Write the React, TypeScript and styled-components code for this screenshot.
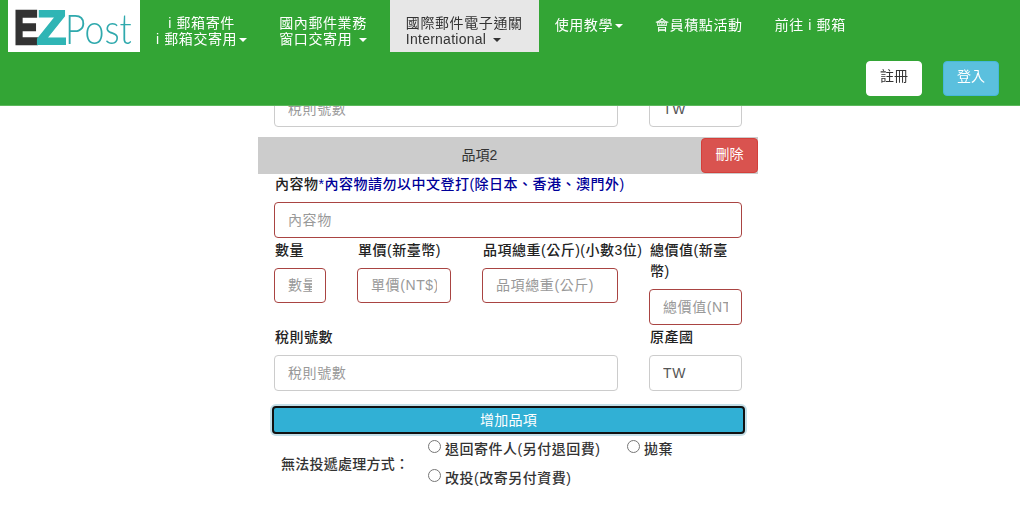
import React from "react";
import styled, { createGlobalStyle } from "styled-components";

const FONT = `"Liberation Sans", "Noto Sans CJK TC", sans-serif`;

const Global = createGlobalStyle`
  html, body { margin: 0; padding: 0; background: #fff; overflow: hidden; }
  body { font-family: ${FONT}; font-size: 14px; color: #333; }
  * { box-sizing: border-box; }
`;

const Header = styled.header`
  position: fixed;
  top: 0; left: 0; right: 0;
  height: 106px;
  background: #33a535;
  border-bottom: 1px solid #5cb85c;
  z-index: 10;
`;
const TopRow = styled.div`
  display: flex;
  align-items: flex-start;
  padding-left: 8px;
  height: 61px;
`;
const LogoBox = styled.div`
  width: 132px;
  height: 52px;
  background: #fff;
  flex: none;
`;
const LogoArt = styled.svg`
  display: block;
  overflow: visible;
`;
const NavItem = styled.div<{ $active?: boolean; $wide?: boolean; $single?: boolean }>`
  height: 52px;
  padding: ${p => (p.$single ? "17px" : "15px")} ${p => (p.$wide ? "23px" : "16px")} 0 16px;
  color: ${p => (p.$active ? "#333" : "#fff")};
  background: ${p => (p.$active ? "#e7e7e7" : "transparent")};
  line-height: 16px;
  letter-spacing: 0.6px;
  text-align: ${p => (p.$active ? "left" : "center")};
  white-space: nowrap;
`;
const Latin = styled.span`
  letter-spacing: 0.25px;
`;
const Caret = styled.span`
  display: inline-block;
  width: 0; height: 0;
  margin-left: 2px;
  vertical-align: middle;
  border-top: 4px solid currentColor;
  border-left: 4px solid transparent;
  border-right: 4px solid transparent;
`;
const ButtonRow = styled.div`
  display: flex;
  justify-content: flex-end;
  gap: 21px;
  padding-right: 21px;
`;
const AuthButton = styled.button<{ $primary?: boolean }>`
  width: 56px;
  height: 35px;
  border-radius: 4px;
  border: 1px solid ${p => (p.$primary ? "#46b8da" : "#fff")};
  background: ${p => (p.$primary ? "#5bc0de" : "#fff")};
  color: ${p => (p.$primary ? "#fff" : "#333")};
  font: 14px/20px ${FONT};
  padding: 0 0 5px;
`;

const Main = styled.main`
  width: 500px;
  margin-left: 258px;
  padding-top: 91px;
`;
const Grid = styled.div<{ $cols: string; $top?: number }>`
  display: grid;
  grid-template-columns: ${p => p.$cols};
  column-gap: 31px;
  padding: 0 16px;
  margin-top: ${p => p.$top ?? 0}px;
`;
const Field = styled.div`
  display: flex;
  flex-direction: column;
  justify-content: flex-start;
`;
const Label = styled.label<{ $nowrap?: boolean }>`
  display: block;
  font-weight: 500;
  line-height: 21.5px;
  letter-spacing: 0.5px;
  padding-left: 1px;
  margin-bottom: 6.5px;
  color: #222;
  white-space: ${p => (p.$nowrap ? "nowrap" : "normal")};
`;
const Input = styled.input<{ $error?: boolean }>`
  display: block;
  width: 100%;
  height: 35.5px;
  border-radius: 4px;
  border: 1px solid ${p => (p.$error ? "#a94442" : "#ccc")};
  padding: 0 13px;
  font: 14px ${FONT};
  letter-spacing: 0.6px;
  color: #555;
  background: #fff;
  outline: none;
  &::placeholder { color: #999; opacity: 1; }
`;
const ItemBar = styled.div`
  position: relative;
  margin-top: 10px;
  height: 37px;
  background: #ccc;
  text-align: center;
  line-height: 37px;
  color: #333;
  padding-right: 57px;
`;
const DeleteButton = styled.button`
  position: absolute;
  right: 0; top: 1px;
  width: 57px;
  height: 35px;
  border: 1px solid #d43f3a;
  border-radius: 4px;
  background: #d9534f;
  color: #fff;
  font: 14px/20px ${FONT};
  padding: 0 0 2px;
`;
const ContentLabel = styled(Label)`
  margin: 0 16px 7px;
`;
const Notice = styled.span`
  color: #000099;
`;
const Block = styled.div`
  padding: 0 16px;
`;
const AddWrap = styled.div`
  margin: 15.5px 0 0 14px;
`;
const AddButton = styled.button`
  display: block;
  width: 473px;
  height: 28px;
  background: #31b0d5;
  color: #fff;
  font: 14px/20px ${FONT};
  letter-spacing: 0.25px;
  border: 2px solid #111;
  border-radius: 4px;
  box-shadow: 0 0 0 2px #c4dfe8;
  padding: 0;
`;
const Disposal = styled.div`
  display: flex;
  align-items: center;
  margin-top: 3.5px;
  padding-left: 23px;
`;
const DisposalLabel = styled.div`
  width: 147px;
  font-weight: 500;
  letter-spacing: 0.25px;
`;
const RadioGroup = styled.div`
  display: grid;
  grid-template-columns: 199px auto;
  justify-content: start;
  row-gap: 8px;
`;
const RadioLabel = styled.label`
  display: flex;
  align-items: center;
  height: 21px;
  font-weight: 500;
  letter-spacing: 0.5px;
  white-space: nowrap;
`;
const Radio = styled.input`
  width: 13px;
  height: 13px;
  margin: 0 4px 3px 0;
  flex: none;
`;

function Logo() {
  return (
    <LogoArt width="132" height="52" viewBox="0 0 132 52" role="img" aria-label="EZPost">
      <text transform="translate(6 44) scale(.76 1)" fontFamily="Liberation Sans" fontWeight="700" fontSize="48" fill="#333" stroke="#333" strokeWidth="2.5">E</text>
      <text transform="translate(28.5 44) scale(1.02 1)" fontFamily="Liberation Sans" fontWeight="700" fontSize="48" fill="#2fb5b5" stroke="#2fb5b5" strokeWidth="2">Z</text>
      <text transform="translate(57 44) scale(.87 1)" fontFamily="Lato" fontWeight="300" fontSize="41" fill="#2fa9ad">Post</text>
    </LogoArt>
  );
}

export default function App() {
  return (
    <>
      <Global />
      <Header>
        <TopRow>
          <LogoBox><Logo /></LogoBox>
          <NavItem>i 郵箱寄件<br />i 郵箱交寄用<Caret /></NavItem>
          <NavItem $wide>國內郵件業務<br />窗口交寄用 <Caret /></NavItem>
          <NavItem $active>國際郵件電子通關<br /><Latin>International</Latin> <Caret /></NavItem>
          <NavItem $single>使用教學<Caret /></NavItem>
          <NavItem $single>會員積點活動</NavItem>
          <NavItem $single>前往 i 郵箱</NavItem>
        </TopRow>
        <ButtonRow>
          <AuthButton>註冊</AuthButton>
          <AuthButton $primary>登入</AuthButton>
        </ButtonRow>
      </Header>
      <Main>
        <Grid $cols="344px 93px">
          <Input placeholder="稅則號數" readOnly />
          <Input defaultValue="TW" />
        </Grid>
        <ItemBar>品項2<DeleteButton>刪除</DeleteButton></ItemBar>
        <ContentLabel>內容物<Notice>*內容物請勿以中文登打(除日本、香港、澳門外)</Notice></ContentLabel>
        <Block><Input $error placeholder="內容物" /></Block>
        <Grid $cols="52px 94px 136px 93px" $top={2}>
          <Field><Label>數量</Label><Input $error placeholder="數量" /></Field>
          <Field><Label>單價(新臺幣)</Label><Input $error placeholder="單價(NT$)" /></Field>
          <Field><Label $nowrap>品項總重(公斤)(小數3位)</Label><Input $error placeholder="品項總重(公斤)" /></Field>
          <Field><Label>總價值(新臺幣)</Label><Input $error placeholder="總價值(NT$)" /></Field>
        </Grid>
        <Grid $cols="344px 93px" $top={2.5}>
          <Field><Label>稅則號數</Label><Input placeholder="稅則號數" /></Field>
          <Field><Label>原產國</Label><Input defaultValue="TW" /></Field>
        </Grid>
        <AddWrap><AddButton>增加品項</AddButton></AddWrap>
        <Disposal>
          <DisposalLabel>無法投遞處理方式：</DisposalLabel>
          <RadioGroup>
            <RadioLabel><Radio type="radio" name="d" />退回寄件人(另付退回費)</RadioLabel>
            <RadioLabel><Radio type="radio" name="d" />拋棄</RadioLabel>
            <RadioLabel><Radio type="radio" name="d" />改投(改寄另付資費)</RadioLabel>
          </RadioGroup>
        </Disposal>
      </Main>
    </>
  );
}
